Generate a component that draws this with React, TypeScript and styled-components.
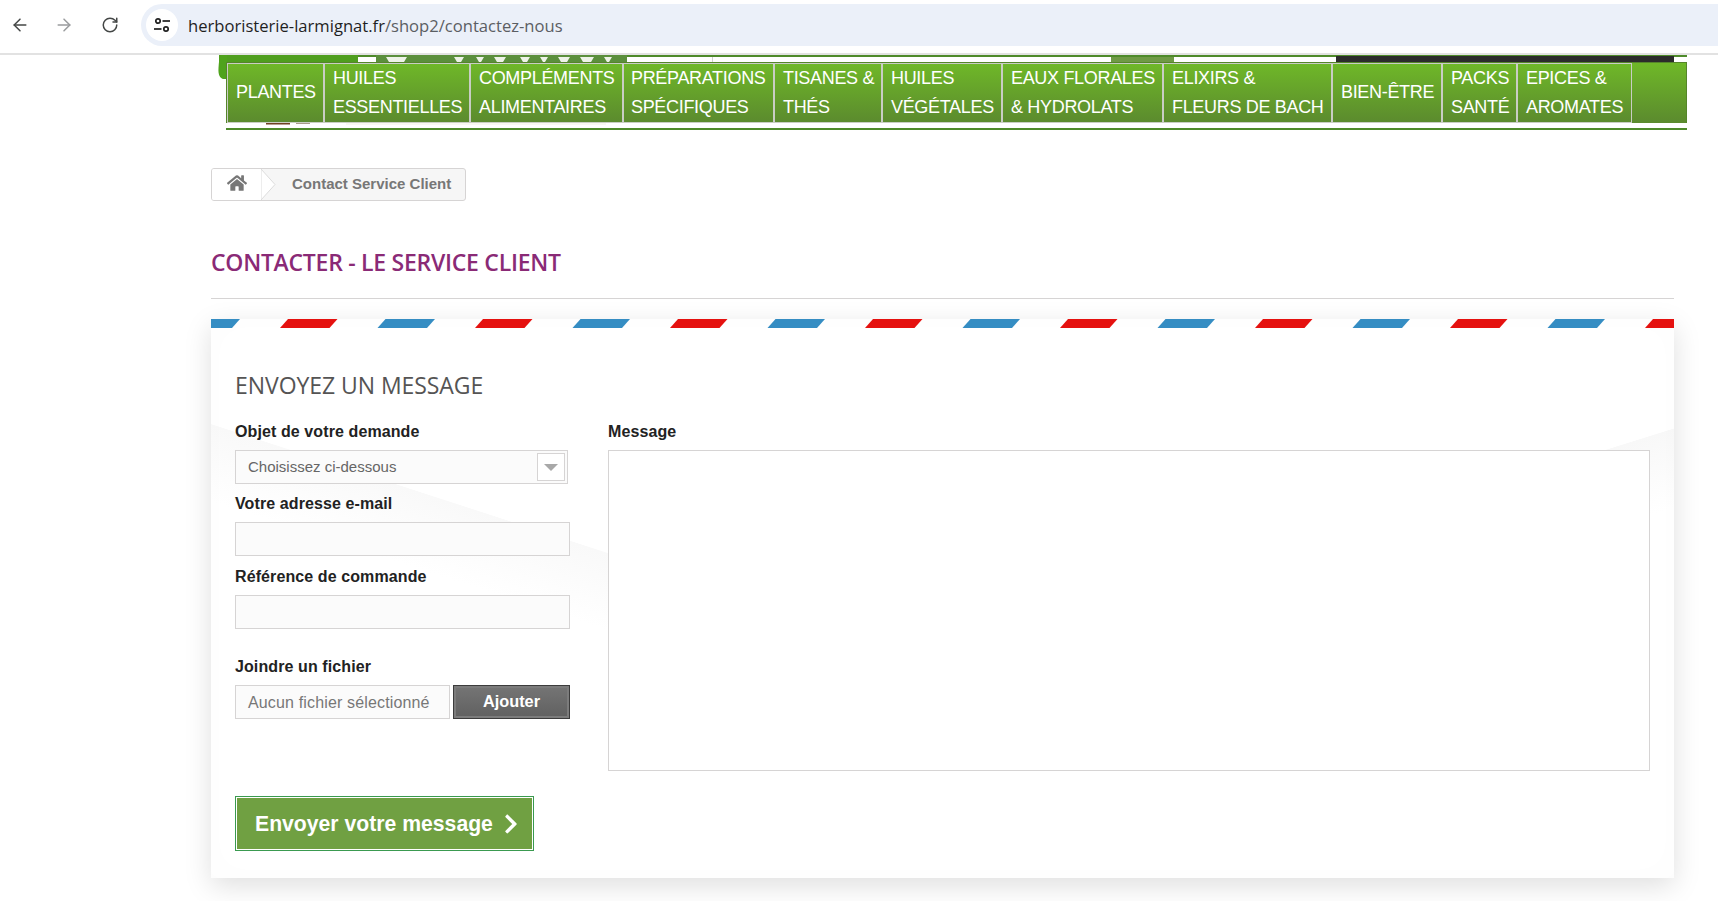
import React from 'react';
import styled, { createGlobalStyle } from 'styled-components';
import { ArrowLeft, ArrowRight, RotateCw } from 'lucide-react';
import { FaHome, FaChevronRight } from 'react-icons/fa';

const Global = createGlobalStyle`
  html, body { margin: 0; padding: 0; background: #fff; }
  body { font-family: "Liberation Sans", Arial, sans-serif; overflow: hidden; }
  * { box-sizing: border-box; }
`;

const Page = styled.div`
  width: 1718px;
  height: 901px;
  overflow: hidden;
  display: flex;
  flex-direction: column;
`;

const BrowserBar = styled.div`
  height: 55px;
  flex: none;
  display: flex;
  align-items: flex-start;
  background: #fff;
  border-bottom: 2px solid #e2e2e2;
  padding-top: 4px;
`;

const NavButton = styled.div<{ $w: number; $color: string }>`
  width: ${p => p.$w}px;
  height: 42px;
  flex: none;
  display: flex;
  align-items: center;
  justify-content: center;
  color: ${p => p.$color};
`;

const Omnibox = styled.div`
  flex: 1;
  height: 42px;
  margin-left: 8px;
  border-radius: 21px 0 0 21px;
  background: #ebf0f9;
  display: flex;
  align-items: center;
  padding-left: 5px;
`;

const SiteInfo = styled.div`
  width: 32px;
  height: 32px;
  border-radius: 50%;
  background: #fff;
  display: flex;
  align-items: center;
  justify-content: center;
  margin-right: 10px;
`;

const Url = styled.div`
  font-family: "Open Sans", sans-serif;
  font-size: 16.6px;
  padding-top: 1px;
  color: #5b5e63;
  white-space: nowrap;
`;

const Domain = styled.span`
  color: #1f1f1f;
`;

const Header = styled.div`
  position: relative;
  margin-left: 218px;
  width: 1469px;
  flex: none;
`;

const LogoStrip = styled.svg`
  display: block;
  width: 1469px;
  height: 7px;
`;

const LogoBlob = styled.svg`
  position: absolute;
  left: 0;
  top: 0;
  width: 9px;
  height: 24px;
`;

const Menu = styled.nav`
  margin-left: 8px;
  height: 61px;
  border: 1px solid #55852a;
  border-bottom: none;
  background: linear-gradient(#6fb828, #5b8a2e);
  display: flex;
  position: relative;
`;

const MenuItem = styled.a<{ $w: number; $pad?: number }>`
  width: ${p => p.$w}px;
  flex: none;
  height: 60px;
  border: 1px solid #c9cdc4;
  display: flex;
  align-items: center;
  padding: 0 0 1px ${p => p.$pad ?? 8}px;
  color: #fff;
  font-size: 18px;
  letter-spacing: -0.32px;
  line-height: 29px;
  white-space: nowrap;
`;

const MenuUnder = styled.div`
  margin-left: 8px;
  height: 7px;
  border-bottom: 2px solid #4e8a2a;
  position: relative;
`;

const UnderSmudge = styled.svg`
  position: absolute;
  left: 0;
  top: 0;
  width: 420px;
  height: 5px;
`;

const Main = styled.main`
  margin-left: 211px;
  width: 1463px;
  display: flex;
  flex-direction: column;
  align-items: flex-start;
`;

const Breadcrumb = styled.div`
  margin-top: 38px;
  height: 33px;
  width: 255px;
  border: 1px solid #d6d4d4;
  border-radius: 3px;
  background: #f6f6f6;
  display: flex;
  align-items: center;
  overflow: hidden;
  flex: none;
`;

const HomeCell = styled.div`
  width: 50px;
  height: 100%;
  flex: none;
  background: #fff;
  display: flex;
  align-items: flex-start;
  justify-content: flex-start;
  padding: 4px 0 0 15px;
  color: #777;
  position: relative;
`;

const CrumbNotch = styled.svg`
  position: absolute;
  right: -14px;
  top: 0;
  width: 15px;
  height: 31px;
`;

const CrumbText = styled.div`
  margin-left: 30px;
  font-size: 15px;
  font-weight: 700;
  color: #777;
  white-space: nowrap;
  padding-bottom: 3px;
`;

const Title = styled.h1`
  margin: 45px 0 0;
  width: 100%;
  height: 53px;
  border-bottom: 1px solid #d6d4d4;
  font-family: "Open Sans", sans-serif;
  font-size: 23px;
  line-height: 32px;
  font-weight: 600;
  letter-spacing: -0.27px;
  color: #8a2a76;
  text-transform: uppercase;
`;

const Card = styled.section`
  margin-top: 20px;
  width: 100%;
  height: 559px;
  flex: none;
  padding: 0 24px;
  box-shadow: 0 8px 26px rgba(0, 0, 0, 0.13), inset 0 0 36px rgba(0, 0, 0, 0.012);
  background-color: #fff;
  background-image:
    linear-gradient(198deg, transparent 316px, #f9f9f9 316.6px, rgba(255, 255, 255, 0) 390px),
    linear-gradient(162.6deg, transparent 164px, #f8f8f8 164.6px, rgba(255, 255, 255, 0) 240px);
  background-size: 700px 100%, 200px 100%;
  background-position: left top, right top;
  background-repeat: no-repeat;
`;

const AirmailStripe = styled.svg`
  display: block;
  width: calc(100% + 48px);
  height: 9px;
  margin: 0 -24px;
`;

const CardHeading = styled.h2`
  margin: 41px 0 0;
  height: 32px;
  font-family: "Open Sans", sans-serif;
  font-size: 23px;
  line-height: 32px;
  font-weight: 400;
  letter-spacing: -0.06px;
  color: #555454;
  text-transform: uppercase;
  white-space: nowrap;
`;

const FormGrid = styled.div`
  margin-top: 21px;
  display: grid;
  grid-template-columns: 335px 1042px;
  column-gap: 38px;
`;

const Column = styled.div`
  display: flex;
  flex-direction: column;
`;

const Label = styled.label<{ $top?: number }>`
  display: block;
  height: 20px;
  line-height: 20px;
  margin-top: ${p => p.$top ?? 0}px;
  margin-bottom: 8px;
  font-size: 16px;
  font-weight: 700;
  letter-spacing: 0.1px;
  color: #222;
  white-space: nowrap;
`;

const SelectBox = styled.div`
  width: 333px;
  height: 34px;
  border: 1px solid #d6d4d4;
  background: #fbfbfb;
  display: flex;
  align-items: center;
  justify-content: space-between;
  padding: 2px;
  font-size: 15px;
  color: #666;
`;

const SelectValue = styled.span`
  padding: 0 0 2px 10px;
`;

const SelectArrow = styled.span`
  width: 28px;
  height: 28px;
  background: #fff;
  border: 1px solid #d6d4d4;
  display: flex;
  align-items: center;
  justify-content: center;
  &::after {
    content: '';
    border-left: 7px solid transparent;
    border-right: 7px solid transparent;
    border-top: 7px solid #a8a8a8;
  }
`;

const TextInput = styled.input`
  display: block;
  width: 335px;
  height: 34px;
  border: 1px solid #d6d4d4;
  background: #fbfbfb;
  outline: none;
  padding: 0;
`;

const FileRow = styled.div`
  display: flex;
  gap: 3px;
`;

const FileName = styled.div`
  width: 215px;
  height: 34px;
  border: 1px solid #d6d4d4;
  background: #fbfbfb;
  font-size: 16px;
  letter-spacing: 0.15px;
  line-height: 34px;
  padding-left: 12px;
  color: #777;
  white-space: nowrap;
`;

const AddButton = styled.button`
  width: 117px;
  height: 34px;
  padding: 0 0 1px;
  border: 1px solid #3c3c3c;
  box-shadow: inset 0 0 0 2px #7c7c7c;
  background: linear-gradient(#757575, #606060);
  color: #fff;
  font: 700 16.3px "Liberation Sans", sans-serif;
`;

const MessageArea = styled.textarea`
  display: block;
  width: 1042px;
  height: 321px;
  border: 1px solid #d6d4d4;
  background: #fff;
  outline: none;
  resize: none;
  padding: 0;
`;

const SubmitButton = styled.button`
  margin-top: 25px;
  width: 299px;
  height: 55px;
  display: flex;
  align-items: center;
  gap: 7px;
  padding: 1px 0 0 19px;
  border: 1px solid #3a9a50;
  box-shadow: inset 0 0 0 1px #fff;
  background: #70a042;
  color: #fff;
  font: 700 21.2px "Liberation Sans", sans-serif;
  white-space: nowrap;
`;

const items: { lines: string[]; w: number; pad?: number }[] = [
  { lines: ['PLANTES'], w: 97 },
  { lines: ['HUILES', 'ESSENTIELLES'], w: 146 },
  { lines: ['COMPLÉMENTS', 'ALIMENTAIRES'], w: 153 },
  { lines: ['PRÉPARATIONS', 'SPÉCIFIQUES'], w: 151, pad: 7 },
  { lines: ['TISANES &', 'THÉS'], w: 108 },
  { lines: ['HUILES', 'VÉGÉTALES'], w: 120 },
  { lines: ['EAUX FLORALES', '& HYDROLATS'], w: 161 },
  { lines: ['ELIXIRS &', 'FLEURS DE BACH'], w: 169 },
  { lines: ['BIEN-ÊTRE'], w: 110 },
  { lines: ['PACKS', 'SANTÉ'], w: 75 },
  { lines: ['EPICES &', 'AROMATES'], w: 115 },
];

const TuneIcon = () => (
  <svg width="18" height="18" viewBox="0 0 18 18" fill="none" stroke="#1f1f1f" strokeWidth="1.7">
    <circle cx="5" cy="5" r="2.2" />
    <path d="M9.5 5H17" />
    <circle cx="13" cy="13" r="2.2" />
    <path d="M1 13H8.5" />
  </svg>
);

const Stripes = () => (
  <AirmailStripe viewBox="0 0 1463 9" preserveAspectRatio="none">
    <defs>
      <pattern id="air" x="0" y="0" width="195" height="9" patternUnits="userSpaceOnUse">
        <polygon points="69,9 77,0 126.5,0 118.5,9" fill="#e5110f" />
        <polygon points="-28.5,9 -20.5,0 29,0 21,9" fill="#358dc3" />
        <polygon points="166.5,9 174.5,0 224,0 216,9" fill="#358dc3" />
      </pattern>
    </defs>
    <rect width="1463" height="9" fill="url(#air)" />
  </AirmailStripe>
);

/* x offsets of the pale fragments left of the cut-off logo lettering */
const logoGaps = [
  [168, 189], [236, 246], [258, 266], [276, 288], [302, 312], [322, 330], [340, 352], [362, 376], [386, 394],
];

export default function App() {
  return (
    <Page>
      <Global />
      <BrowserBar>
        <NavButton $w={40} $color="#444746"><ArrowLeft size={20} strokeWidth={1.8} /></NavButton>
        <NavButton $w={47} $color="#9a9c9e"><ArrowRight size={20} strokeWidth={1.8} /></NavButton>
        <NavButton $w={46} $color="#444746"><RotateCw size={18} strokeWidth={2} /></NavButton>
        <Omnibox>
          <SiteInfo><TuneIcon /></SiteInfo>
          <Url><Domain>herboristerie-larmignat.fr</Domain>/shop2/contactez-nous</Url>
        </Omnibox>
      </BrowserBar>

      <Header>
        <LogoStrip viewBox="0 0 1469 7">
          <rect x="8" y="0" width="1461" height="2" fill="#4e8a2a" />
          <rect x="1" y="0" width="139" height="7" fill="#4f9e1e" />
          <rect x="140" y="2" width="18" height="5" fill="#fff" />
          <rect x="158" y="0" width="251" height="7" fill="#5b8f3c" />
          {logoGaps.map(([a, b]) => (
            <polygon key={a} points={`${a},2 ${b},2 ${b - 3},7 ${a + 3},7`} fill="#eef3e8" />
          ))}
          <rect x="893" y="2" width="63" height="5" fill="#6f9a45" />
          <rect x="1118" y="1" width="338" height="6" fill="#2b2b2b" />
          <rect x="494" y="2" width="1" height="5" fill="#cfcfcf" />
        </LogoStrip>
        <LogoBlob viewBox="0 0 9 24">
          <path d="M3 0H9V24H5C2 23 0 20 0.5 13C1 7 1 3 3 0Z" fill="#4fa31c" />
        </LogoBlob>
        <Menu>
          {items.map(it => (
            <MenuItem key={it.lines[0] + it.lines.length} $w={it.w} $pad={it.pad}>
              <span>{it.lines.map((l, i) => <React.Fragment key={l}>{i > 0 && <br />}{l}</React.Fragment>)}</span>
            </MenuItem>
          ))}
        </Menu>
        <MenuUnder>
          <UnderSmudge viewBox="0 0 420 5">
            <rect x="40" y="0" width="24" height="1.5" fill="#6e3f22" />
            <rect x="70" y="0" width="14" height="1" fill="#a89a8a" />
            <rect x="120" y="0" width="260" height="2" fill="#f8f8f2" />
          </UnderSmudge>
        </MenuUnder>
      </Header>

      <Main>
        <Breadcrumb>
          <HomeCell>
            <FaHome size={20} />
            <CrumbNotch viewBox="0 0 15 31">
              <path d="M0 0L14 15.5L0 31Z" fill="#fff" stroke="#dcdcdc" />
            </CrumbNotch>
          </HomeCell>
          <CrumbText>Contact Service Client</CrumbText>
        </Breadcrumb>

        <Title>Contacter - le service client</Title>

        <Card>
          <Stripes />
          <CardHeading>Envoyez un message</CardHeading>
          <FormGrid>
            <Column>
              <Label>Objet de votre demande</Label>
              <SelectBox>
                <SelectValue>Choisissez ci-dessous</SelectValue>
                <SelectArrow />
              </SelectBox>
              <Label $top={10}>Votre adresse e-mail</Label>
              <TextInput />
              <Label $top={11}>Référence de commande</Label>
              <TextInput />
              <Label $top={28}>Joindre un fichier</Label>
              <FileRow>
                <FileName>Aucun fichier sélectionné</FileName>
                <AddButton>Ajouter</AddButton>
              </FileRow>
            </Column>
            <Column>
              <Label>Message</Label>
              <MessageArea />
            </Column>
          </FormGrid>
          <SubmitButton>
            Envoyer votre message
            <FaChevronRight size={22} />
          </SubmitButton>
        </Card>
      </Main>
    </Page>
  );
}
